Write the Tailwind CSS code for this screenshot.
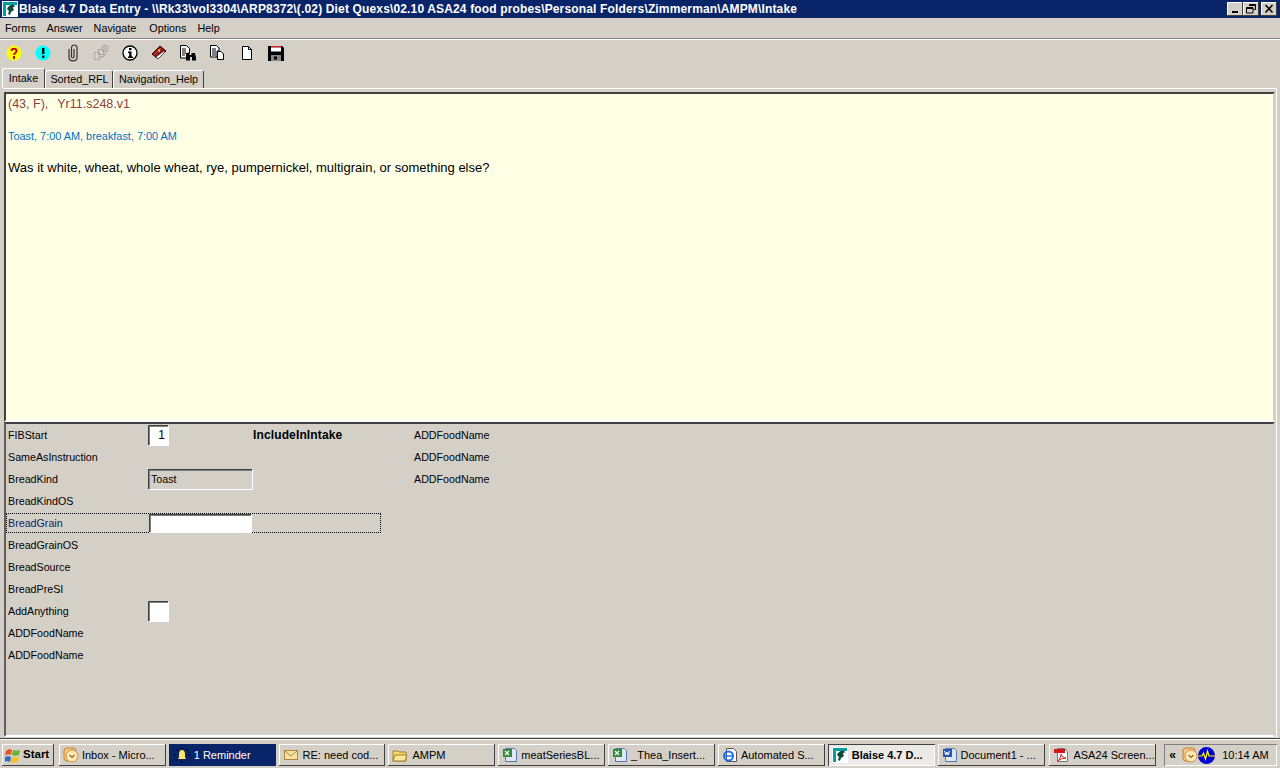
<!DOCTYPE html>
<html>
<head>
<meta charset="utf-8">
<script src="https://cdn.jsdelivr.net/npm/@tailwindcss/browser@4"></script>
</head>
<body class="m-0 overflow-hidden">
<div class="w-[1280px] h-[768px] bg-[#d4d0c8] flex flex-col font-['Liberation_Sans',Arial,sans-serif] text-[11px] text-black overflow-hidden">

  <!-- title bar -->
  <div class="h-[18px] shrink-0 bg-[#0a246a] text-white flex items-center pl-[2px] pr-[3px]">
    <svg width="16" height="16" viewBox="0 0 16 16" class="shrink-0"><rect width="16" height="16" fill="#fff"/><rect x="1" y="1" width="14" height="14" fill="#00a0a0"/><rect x="4" y="4" width="11" height="11" fill="#fff"/><path d="M5 8c1-3 4-5 7-4l2 2c-2-1-3 0-3 1l1 2-3 2-1 3-2-1 1-3z" fill="#0b4a3a"/></svg>
    <span class="ml-[1px] font-bold text-[12px] tracking-[0.15px] whitespace-nowrap">Blaise 4.7 Data Entry - \\Rk33\vol3304\ARP8372\(.02) Diet Quexs\02.10 ASA24 food probes\Personal Folders\Zimmerman\AMPM\Intake</span>
    <div class="ml-auto flex">
      <div class="w-[16px] h-[14px] bg-[#d4d0c8] shadow-[inset_-1px_-1px_0_#404040,inset_1px_1px_0_#fff] flex items-end justify-center pb-[3px]"><div class="w-[6px] h-[2px] bg-black"></div></div>
      <div class="w-[16px] h-[14px] bg-[#d4d0c8] shadow-[inset_-1px_-1px_0_#404040,inset_1px_1px_0_#fff]">
        <svg width="16" height="14" viewBox="0 0 16 14"><path d="M6.500 4V2.500h6v5H10.500M6.500 3.500h6" fill="none" stroke="#000"/><path d="M3.500 5.500h6.500v5.500H3.500zM3.500 6.500h6.500" fill="none" stroke="#000"/></svg>
      </div>
      <div class="ml-[2px] w-[16px] h-[14px] bg-[#d4d0c8] shadow-[inset_-1px_-1px_0_#404040,inset_1px_1px_0_#fff]">
        <svg width="16" height="14" viewBox="0 0 16 14"><path d="M4.500 3l7 7.500M11.500 3l-7 7.500" stroke="#000" stroke-width="1.600"/></svg>
      </div>
    </div>
  </div>

  <!-- menu -->
  <div class="h-[20px] shrink-0 flex items-center pl-[5px] gap-[11px] text-[10.800px]">
    <span>Forms</span><span>Answer</span><span>Navigate</span><span class="ml-[2px]">Options</span><span>Help</span>
  </div>
  <div class="h-[2px] shrink-0 border-t border-[#808080] border-b-[1px] border-b-white"></div>

  <!-- toolbar -->
  <div class="h-[28px] shrink-0 flex items-center pl-[6px] pb-[2px] gap-[13px]">
    <svg width="16" height="16" viewBox="0 0 16 16"><circle cx="8" cy="8" r="7.500" fill="#ffff00"/><path d="M5.500 6c0-3 5-3 5 0 0 2-2.500 2-2.500 4" fill="none" stroke="#d00000" stroke-width="1.800"/><rect x="7" y="11" width="2" height="3" fill="#d00000"/></svg>
    <svg width="16" height="16" viewBox="0 0 16 16"><circle cx="8" cy="8" r="7.500" fill="#00ffff"/><rect x="7" y="3" width="2.400" height="6" fill="#000"/><rect x="7" y="10.500" width="2.400" height="2.400" fill="#000"/></svg>
    <svg width="16" height="18" viewBox="0 0 16 18" class="ml-[1px]"><path d="M4 5v8.500c0 4.500 8 4.500 8 0V4c0-4-5.500-4-5.500 0v8.500c0 2 2.500 2 2.500 0V5" fill="none" stroke="#333" stroke-width="1.200"/></svg>
    <svg width="16" height="16" viewBox="0 0 16 16" class="-ml-[1px]"><g fill="none" stroke="#9a9a9a"><rect x="1.500" y="7.500" width="5" height="7" stroke-dasharray="2 1"/><rect x="5.500" y="4.500" width="5" height="5" stroke-dasharray="2 1"/><circle cx="12" cy="3.500" r="3"/><path d="M6 12h4l3-4" /></g><path d="M12 2v3" stroke="#9a9a9a"/></svg>
    <svg width="16" height="16" viewBox="0 0 16 16"><circle cx="8" cy="8" r="7" fill="#fff" stroke="#000" stroke-width="1.300"/><rect x="7" y="3" width="2.500" height="2.200" fill="#000"/><path d="M6 6.500h3.500V11.500H11V13H6v-1.500h1.200V8H6z" fill="#000"/></svg>
    <svg width="16" height="16" viewBox="0 0 16 16"><path d="M1 9l8-8 6 5-8 8z" fill="#8e1a20" stroke="#300"/><path d="M3 10l7-7" stroke="#c55"/><path d="M5 12l8-6 1 1-7 7z" fill="#fff" stroke="#222" stroke-width=".6"/><path d="M7 5l2 0-1 2" stroke="#ff0" fill="none"/></svg>
    <svg width="16" height="16" viewBox="0 0 16 16"><path d="M.5.500h6l3 3V8h-2v5h-7z" fill="#fff" stroke="#000"/><path d="M2 4h4M2 6h4M2 8h4M2 10h3" stroke="#000"/><path d="M6 8h3.500v2h2V8H15l1 5v2.500h-4V12H10v3.500H6V13z" fill="#000"/></svg>
    <svg width="16" height="16" viewBox="0 0 16 16"><path d="M1.500.500h6l2.500 2.500V6H8v6H1.500z" fill="#fff" stroke="#000"/><path d="M3 4h4M3 6h4M3 8h4M3 10h4" stroke="#000"/><path d="M8.500 6.500h3.500l2.500 2.500v5.500h-6z" fill="#fff" stroke="#000"/></svg>
    <svg width="16" height="16" viewBox="0 0 16 16" class="ml-[1px]"><path d="M3.500 1.500h6l3 3v10h-9z" fill="#fff" stroke="#000"/><path d="M9.500 1.500v3h3" fill="none" stroke="#000"/></svg>
    <svg width="16" height="16" viewBox="0 0 16 16"><path d="M0 1h14l2 2v13H0z" fill="#000"/><rect x="3" y="1" width="10" height="1.500" fill="#e02020"/><rect x="3" y="2.500" width="10" height="4" fill="#fff"/><rect x="3" y="10" width="10" height="6" fill="#888"/><rect x="6" y="11.500" width="3" height="3" fill="#000"/></svg>
  </div>

  <!-- tabs -->
  <div class="h-[20px] shrink-0 pl-[2px] flex items-end text-[10.800px]">
    <div class="h-[20px] w-[43px] bg-[#d4d0c8] rounded-t-[2px] shadow-[inset_1px_1px_0_#fff,inset_-1px_0_0_#404040] flex items-center justify-center">Intake</div>
    <div class="h-[18px] w-[68px] rounded-t-[2px] shadow-[inset_1px_1px_0_#fff,inset_-1px_0_0_#404040] flex items-center justify-center pl-[1px] pt-[1px]">Sorted_RFL</div>
    <div class="h-[18px] w-[91px] rounded-t-[2px] shadow-[inset_1px_1px_0_#fff,inset_-1px_0_0_#404040] flex items-center justify-center pt-[1px]">Navigation_Help</div>
  </div>

  <!-- page -->
  <div class="h-[650px] shrink-0 mx-[3px] border-t border-white border-r-[1px] border-r-[#fff] pl-[1px] pr-[1px] pt-[3px] pb-[1px] flex flex-col">
    <!-- info pane -->
    <div class="h-[330px] shrink-0 bg-[#ffffe6] border-2 border-t-[#404040] border-l-[#404040] border-r-[#d4d0c8] border-b-white pl-[2px] pt-[2px] flex flex-col">
      <div class="h-[16px] text-[12.500px] leading-[16px] text-[#8b4040] whitespace-pre">(43, F),  <span class="ml-[2px]">Yr11.s248.v1</span></div>
      <div class="h-[16px] mt-[16px] text-[#0070c0] text-[10.900px] leading-[16px]">Toast, 7:00 AM, breakfast, 7:00 AM</div>
      <div class="h-[16px] mt-[16px] text-[13px] leading-[16px]">Was it white, wheat, whole wheat, rye, pumpernickel, multigrain, or something else?</div>
    </div>
    <!-- form pane -->
    <div class="flex-1 border-2 border-t-[#404040] border-l-[#606060] border-r-[#d4d0c8] border-b-white flex flex-col text-[10.700px]">
      <div class="grid grid-cols-[142px_105px_161px_auto] auto-rows-[22px] w-[375px] items-center leading-[22px]">
        <div class="pl-[2px]">FIBStart</div>
        <div class="h-[22px] flex items-center"><div class="w-[20px] h-[20px] bg-white shadow-[inset_1px_1px_0_#404040,inset_2px_2px_0_#808080,1px_1px_0_#fff] text-right pr-[3px] leading-[20px] text-[12px]">1</div></div>
        <div class="font-bold text-[12px] tracking-[0.13px] whitespace-nowrap">IncludeInIntake</div>
        <div class="whitespace-nowrap">ADDFoodName</div>

        <div class="pl-[2px]">SameAsInstruction</div><div></div><div></div><div class="whitespace-nowrap">ADDFoodName</div>

        <div class="pl-[2px]">BreadKind</div>
        <div class="h-[22px] flex items-center"><div class="w-[104px] h-[20px] shadow-[inset_1px_1px_0_#404040,inset_2px_2px_0_#808080,1px_1px_0_#fff] pl-[3px] leading-[20px]">Toast</div></div>
        <div></div><div class="whitespace-nowrap">ADDFoodName</div>

        <div class="pl-[2px]">BreadKindOS</div><div></div><div></div><div></div>
      </div>
      <div class="w-[375px] h-[20px] my-[1px] border border-dotted border-black flex items-center">
        <div class="w-[142px] pl-[1px] text-[#0a246a]">BreadGrain</div>
        <div class="w-[102px] h-[18px] bg-white shadow-[inset_1px_1px_0_#404040,inset_2px_2px_0_#808080,1px_1px_0_#fff]"></div>
      </div>
      <div class="flex flex-col pl-[2px] leading-[22px]">
        <div class="h-[22px]">BreadGrainOS</div>
        <div class="h-[22px]">BreadSource</div>
        <div class="h-[22px]">BreadPreSI</div>
        <div class="h-[22px] flex items-center"><span class="w-[140px]">AddAnything</span><div class="w-[20px] h-[20px] bg-white shadow-[inset_1px_1px_0_#404040,inset_2px_2px_0_#808080,1px_1px_0_#fff]"></div></div>
        <div class="h-[22px]">ADDFoodName</div>
        <div class="h-[22px]">ADDFoodName</div>
      </div>
    </div>
  </div>

  <!-- taskbar -->
  <div class="flex-1 border-t border-[#404040] shadow-[inset_0_1px_0_#fff] pt-[5px] pl-[2px] pr-[3px] flex gap-[3px] items-start">
    <div class="w-[52px] h-[22px] mr-[2px] shadow-[inset_-1px_-1px_0_#404040,inset_1px_1px_0_#fff] flex items-center pl-[3px] gap-[2px] font-bold text-[11.500px]">
      <svg width="16" height="15" viewBox="0 0 16 15"><path d="M1 3c2-2 4-2 6-1l-1 5c-2-1-4-1-6 1z" fill="#e8502a"/><path d="M8 2c2 1 4 1 7 0l-1 5c-3 1-5 1-7 0z" fill="#6ab42c"/><path d="M0 9c2-1 4-1 6 0l-1 5c-2-1-4-1-6 0z" fill="#3468c8"/><path d="M7 9c2 1 4 1 7 0l-1 5c-3 1-5 1-7 0z" fill="#f8c020"/></svg>Start
    </div>
    <div class="w-[107px] h-[22px] shadow-[inset_-1px_-1px_0_#404040,inset_1px_1px_0_#fff] flex items-center pl-[4px] gap-[3px] whitespace-nowrap overflow-hidden">
      <svg width="16" height="16" viewBox="0 0 16 16" class="shrink-0"><rect x="1" y="1" width="12" height="13" rx="3" fill="#f4c888" stroke="#c88030"/><circle cx="9" cy="9" r="6" fill="#fde8b8" stroke="#d09040"/><path d="M6.500 8l2.500 2.500 2.500-2.500" fill="none" stroke="#a06020" stroke-width="1.200"/></svg><span>Inbox - Micro...</span>
    </div>
    <div class="w-[107px] h-[22px] bg-[#0a246a] text-white flex items-center pl-[5px] gap-[4px] whitespace-nowrap overflow-hidden">
      <svg width="16" height="16" viewBox="0 0 16 16" class="shrink-0"><path d="M8 3c-2 0-3 2-3 4v3l-1 2h8l-1-2V7c0-2-1-4-3-4z" fill="#f8e860"/><path d="M8 0v2M8 14v2M0 8h2M14 8h2M2 2l2 2M14 2l-2 2M2 14l2-2M14 14l-2-2" stroke="#000"/></svg><span>1 Reminder</span>
    </div>
    <div class="w-[107px] h-[22px] shadow-[inset_-1px_-1px_0_#404040,inset_1px_1px_0_#fff] flex items-center pl-[5px] gap-[5px] whitespace-nowrap overflow-hidden">
      <svg width="14" height="12" viewBox="0 0 14 12" class="shrink-0"><rect x=".5" y="1.500" width="13" height="9" fill="#f8e0a0" stroke="#b08840"/><path d="M1 2l6 5 6-5" fill="none" stroke="#b08840"/></svg><span>RE: need cod...</span>
    </div>
    <div class="w-[107px] h-[22px] shadow-[inset_-1px_-1px_0_#404040,inset_1px_1px_0_#fff] flex items-center pl-[4px] gap-[4px] whitespace-nowrap overflow-hidden">
      <svg width="16" height="14" viewBox="0 0 16 14" class="shrink-0"><path d="M1 3h5l1 1h7v9H1z" fill="#f8d868" stroke="#a08020"/><path d="M1 13l2-6h12l-2 6z" fill="#fce898" stroke="#a08020"/></svg><span>AMPM</span>
    </div>
    <div class="w-[107px] h-[22px] shadow-[inset_-1px_-1px_0_#404040,inset_1px_1px_0_#fff] flex items-center pl-[4px] gap-[3px] whitespace-nowrap overflow-hidden">
      <svg width="16" height="16" viewBox="0 0 16 16" class="shrink-0"><path d="M3.500 1.500h9l2 2v11h-11z" fill="#dfe6f4" stroke="#5a78b0"/><rect x="1" y="2" width="9" height="8" fill="#2f8a3a"/><path d="M3 4l4 4M7 4L3 8" stroke="#fff" stroke-width="1.200"/></svg><span>meatSeriesBL...</span>
    </div>
    <div class="w-[107px] h-[22px] shadow-[inset_-1px_-1px_0_#404040,inset_1px_1px_0_#fff] flex items-center pl-[4px] gap-[3px] whitespace-nowrap overflow-hidden">
      <svg width="16" height="16" viewBox="0 0 16 16" class="shrink-0"><path d="M3.500 1.500h9l2 2v11h-11z" fill="#dfe6f4" stroke="#5a78b0"/><rect x="1" y="2" width="9" height="8" fill="#2f8a3a"/><path d="M3 4l4 4M7 4L3 8" stroke="#fff" stroke-width="1.200"/></svg><span>_Thea_Insert...</span>
    </div>
    <div class="w-[107px] h-[22px] shadow-[inset_-1px_-1px_0_#404040,inset_1px_1px_0_#fff] flex items-center pl-[4px] gap-[3px] whitespace-nowrap overflow-hidden">
      <svg width="16" height="16" viewBox="0 0 16 16" class="shrink-0"><path d="M4.500 1.500h7l3 3v10h-10z" fill="#fff" stroke="#555"/><circle cx="6.500" cy="9" r="4.500" fill="none" stroke="#1e6fe0" stroke-width="2"/><path d="M3 9h7" stroke="#1e6fe0" stroke-width="1.500"/></svg><span>Automated S...</span>
    </div>
    <div class="w-[107px] h-[22px] bg-[#eceae6] shadow-[inset_1px_1px_0_#404040,inset_-1px_-1px_0_#fff] flex items-center pl-[4px] gap-[4px] whitespace-nowrap overflow-hidden font-bold">
      <svg width="16" height="16" viewBox="0 0 16 16" class="shrink-0"><rect width="16" height="16" fill="#fff"/><rect x="1" y="1" width="14" height="14" fill="#00a0a0"/><rect x="4" y="4" width="11" height="11" fill="#fff"/><path d="M5 8c1-3 4-5 7-4l2 2c-2-1-3 0-3 1l1 2-3 2-1 3-2-1 1-3z" fill="#0b4a3a"/></svg><span>Blaise 4.7 D...</span>
    </div>
    <div class="w-[108px] h-[22px] shadow-[inset_-1px_-1px_0_#404040,inset_1px_1px_0_#fff] flex items-center pl-[4px] gap-[3px] whitespace-nowrap overflow-hidden">
      <svg width="16" height="16" viewBox="0 0 16 16" class="shrink-0"><path d="M3.500 1.500h9l2 2v11h-11z" fill="#dfe6f4" stroke="#5a78b0"/><rect x="1" y="2" width="9" height="8" fill="#2a55b0"/><path d="M2.500 4l1.300 4 1.200-3 1.200 3 1.300-4" stroke="#fff" fill="none"/></svg><span>Document1 - ...</span>
    </div>
    <div class="w-[107px] h-[22px] ml-[1px] shadow-[inset_-1px_-1px_0_#404040,inset_1px_1px_0_#fff] flex items-center pl-[4px] gap-[4px] whitespace-nowrap overflow-hidden">
      <svg width="16" height="16" viewBox="0 0 16 16" class="shrink-0"><path d="M4.500 1.500h7l3 3v10h-10z" fill="#fff" stroke="#777"/><rect x="1" y="2" width="11" height="4" fill="#d01818"/><path d="M5 14c2-2 3-5 3-7 1 3 3 4 5 4-3 0-6 1-8 3z" fill="none" stroke="#d01818"/></svg><span>ASA24 Screen...</span>
    </div>
    <div class="w-[113px] h-[22px] ml-[5px] shadow-[inset_1px_1px_0_#808080,inset_-1px_-1px_0_#fff] flex items-center pl-[5px] whitespace-nowrap">
      <span class="font-bold text-[12px] leading-none w-[13px]">«</span>
      <svg width="16" height="16" viewBox="0 0 16 16" class="shrink-0"><rect x="1" y="1" width="12" height="13" rx="3" fill="#f4c888" stroke="#c88030"/><circle cx="9" cy="9" r="6" fill="#fde8b8" stroke="#d09040"/><path d="M6.500 8l2.500 2.500 2.500-2.500" fill="none" stroke="#a06020" stroke-width="1.200"/></svg>
      <svg width="17" height="17" viewBox="0 0 17 17" class="shrink-0"><circle cx="8.500" cy="8.500" r="8.500" fill="#0000d0"/><path d="M0 9h4l1.500-3 2 6 2-8 1.500 5h6" fill="none" stroke="#ffff00" stroke-width="1.200"/></svg>
      <span class="ml-[7px]">10:14 AM</span>
    </div>
  </div>
</div>
</body>
</html>
